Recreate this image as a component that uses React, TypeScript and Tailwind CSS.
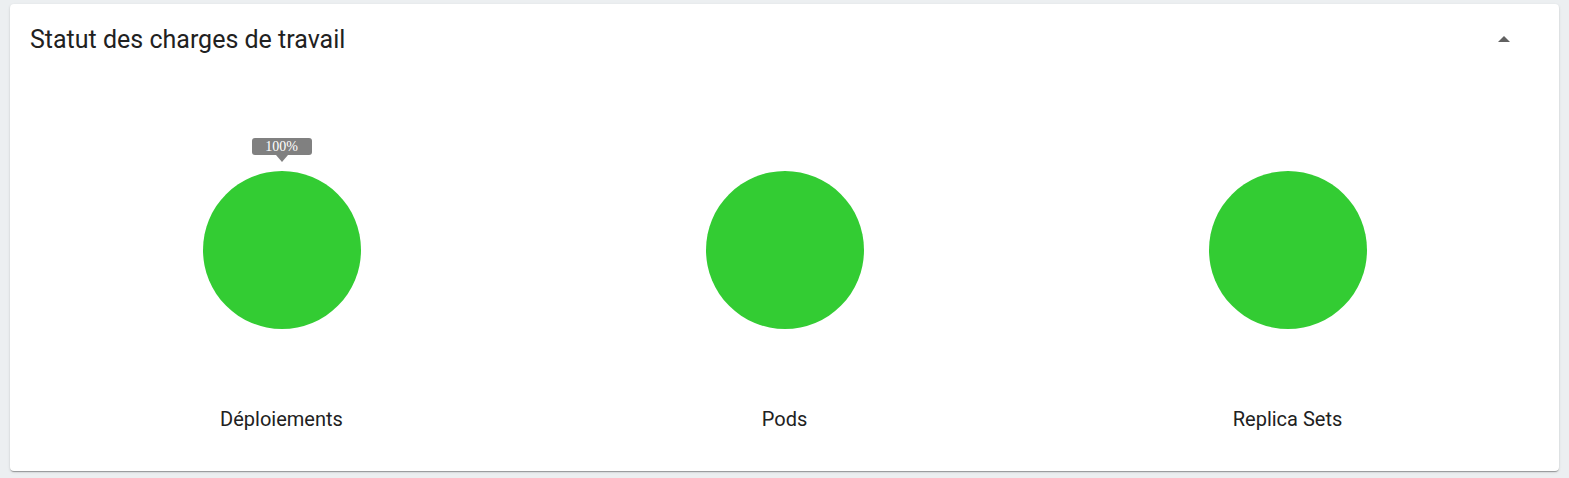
import React from "react";

const items = [
  { label: "Déploiements", tooltip: true },
  { label: "Pods", tooltip: false },
  { label: "Replica Sets", tooltip: false },
];

export default function App() {
  return (
    <div
      className="w-[1569px] h-[478px] bg-[#eceff1] pt-[4px] pl-[10px] pr-[10px]"
      style={{ fontFamily: "Roboto, 'Noto Sans', sans-serif" }}
    >
      <div className="w-[1549px] h-[467px] bg-white rounded-[4px] shadow-[0_2px_1px_-1px_rgba(0,0,0,0.2),0_1px_1px_0_rgba(0,0,0,0.14),0_1px_3px_0_rgba(0,0,0,0.12)] flex flex-col">
        <div className="h-[72px] flex items-center justify-between pl-[20px] pr-[49px]">
          <span className="text-[25px] leading-[30px] text-[#212121]">
            Statut des charges de travail
          </span>
          <svg width="12" height="6" viewBox="0 0 12 6" className="mb-[2px]">
            <polygon points="0,6 6,0 12,6" fill="#616161" />
          </svg>
        </div>
        <div className="grid grid-cols-3 px-[20px]">
          {items.map((it) => (
            <div key={it.label} className="flex flex-col items-center">
              <div className="relative mt-[95px] w-[158px] h-[158px]">
                <div className="w-[158px] h-[158px] rounded-full bg-[#33cc33]" />
                {it.tooltip && (
                  <div className="absolute left-1/2 -translate-x-1/2 top-[-33px] flex flex-col items-center">
                    <div
                      className="w-[60px] h-[17px] rounded-[3px] bg-[#808080] text-white text-[14px] leading-[17px] text-center"
                      style={{ fontFamily: "'Liberation Serif', 'Times New Roman', serif" }}
                    >
                      100%
                    </div>
                    <div className="w-0 h-0 border-l-[6px] border-r-[6px] border-t-[7px] border-l-transparent border-r-transparent border-t-[#808080]" />
                  </div>
                )}
              </div>
              <div className="mt-[78px] text-[20px] leading-[24px] text-[#212121]">
                {it.label}
              </div>
            </div>
          ))}
        </div>
      </div>
    </div>
  );
}
